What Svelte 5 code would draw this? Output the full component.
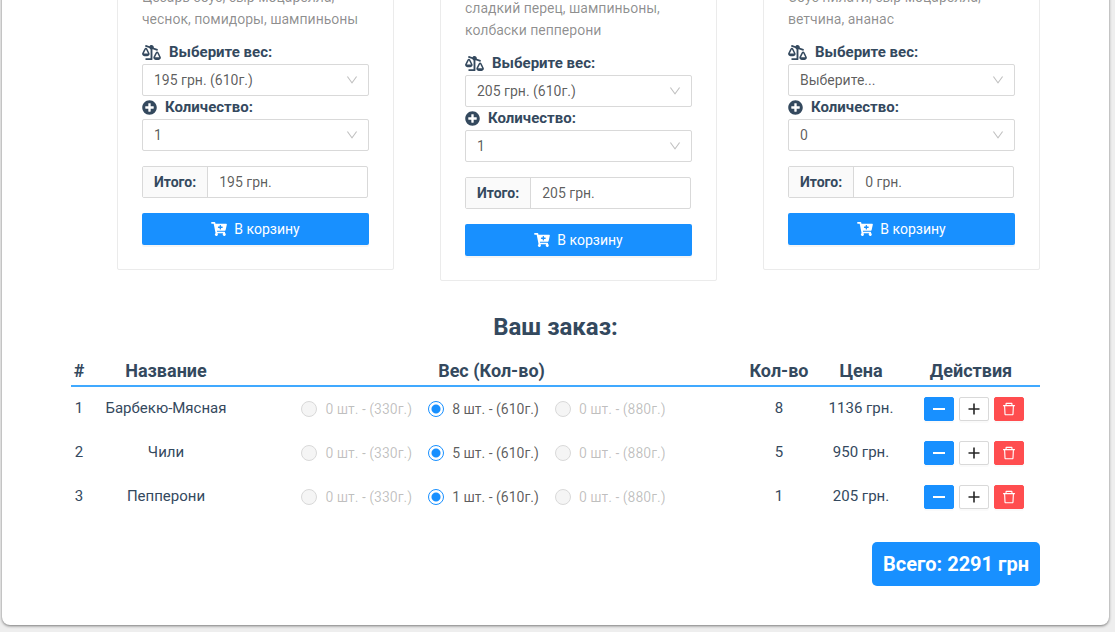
<script>
  let cards = $state([
    { lines: ['Цезарь соус, сыр моцарелла,', 'чеснок, помидоры, шампиньоны'], weight: '195 грн. (610г.)', count: '1', sum: '195 грн.' },
    { lines: ['сладкий перец, шампиньоны,', 'колбаски пепперони'], weight: '205 грн. (610г.)', count: '1', sum: '205 грн.', lower: true },
    { lines: ['Соус пилати, сыр моцарелла,', 'ветчина, ананас'], weight: 'Выберите...', count: '0', sum: '0 грн.' }
  ]);
  const orders = [
    { name: 'Барбекю-Мясная', count: 8, price: 1136 },
    { name: 'Чили', count: 5, price: 950 },
    { name: 'Пепперони', count: 1, price: 205 }
  ];
  const total = orders.reduce((sum, o) => sum + o.price, 0);
</script>

{#snippet chevron()}
  <svg class="chevron" viewBox="64 64 896 896" aria-hidden="true"><path d="M884 256h-75c-5.1 0-9.9 2.5-12.9 6.6L512 654.2 227.9 262.6c-3-4.1-7.8-6.6-12.9-6.6h-75c-6.5 0-10.3 7.4-6.5 12.7l352.6 486.1c12.8 17.6 39 17.6 51.7 0l352.6-486.1c3.9-5.3.1-12.7-6.4-12.7z" /></svg>
{/snippet}

<main>
  <section class="menu">
    {#each cards as card, i}
      <article class="card" class:lower={card.lower}>
        <p class="about">{card.lines[0]}<br />{card.lines[1]}</p>
        <label class="caption" for="weight-{i}">
          <svg class="scale" viewBox="0 0 640 512" aria-hidden="true"><path transform="translate(640 0) scale(-1 1)" d="M528 448H352V153.25c20.42-8.94 36.1-26.22 43.38-47.47l132-44.26c8.38-2.81 12.89-11.88 10.08-20.26l-10.17-30.34C524.48 2.54 515.41-1.97 507.03.84L389.11 40.37C375.3 16.36 349.69 0 320 0c-44.18 0-80 35.82-80 80 0 3.43.59 6.71 1.01 10.03l-128.39 43.05c-8.38 2.81-12.89 11.88-10.08 20.26l10.17 30.34c2.81 8.38 11.88 12.89 20.26 10.08l142.05-47.63c4.07 2.77 8.43 5.12 12.99 7.12V496c0 8.84 7.16 16 16 16h208c8.84 0 16-7.16 16-16v-32c0-8.84-7.16-16-16-16zm111.98-144c0-16.18 1.34-8.73-85.05-181.51-17.65-35.29-68.19-35.36-85.87 0-87.12 174.26-85.04 165.84-85.04 181.51H384c0 44.18 57.31 80 128 80s128-35.82 128-80h-.02zM440 288l72-144 72 144H440zm-269.07-37.51c-17.65-35.29-68.19-35.36-85.87 0C-2.06 424.75.02 416.33.02 432H0c0 44.18 57.31 80 128 80s128-35.82 128-80h-.02c0-16.18 1.34-8.73-85.05-181.51zM56 416l72-144 72 144H56z" /></svg>
          Выберите вес:
        </label>
        <div class="select">
          <select id="weight-{i}" bind:value={card.weight}><option>{card.weight}</option></select>
          {@render chevron()}
        </div>
        <label class="caption" for="count-{i}">
          <svg class="round" viewBox="0 0 512 512" aria-hidden="true"><path d="M256 8C119 8 8 119 8 256s111 248 248 248 248-111 248-248S393 8 256 8zm144 276c0 6.6-5.4 12-12 12h-92v92c0 6.6-5.4 12-12 12h-56c-6.6 0-12-5.4-12-12v-92h-92c-6.6 0-12-5.4-12-12v-56c0-6.6 5.4-12 12-12h92v-92c0-6.6 5.4-12 12-12h56c6.6 0 12 5.4 12 12v92h92c6.6 0 12 5.4 12 12v56z" /></svg>
          Количество:
        </label>
        <div class="select">
          <select id="count-{i}" bind:value={card.count}><option>{card.count}</option></select>
          {@render chevron()}
        </div>
        <div class="sum">
          <label for="sum-{i}">Итого:</label>
          <input id="sum-{i}" type="text" readonly value={card.sum} />
        </div>
        <button class="buy" type="button">
          <svg viewBox="0 0 576 512" aria-hidden="true"><path d="M504.717 320H211.572l6.545 32h268.418c15.401 0 26.816 14.301 23.403 29.319l-5.517 24.276C523.112 414.668 536 433.828 536 456c0 31.202-25.519 56.444-56.824 55.994-29.823-.429-54.35-24.631-55.155-54.447-.44-16.287 6.085-31.049 16.803-41.548H231.176C241.553 426.165 248 440.326 248 456c0 31.813-26.528 57.431-58.67 55.938-28.54-1.325-51.751-24.385-53.251-52.917-1.158-22.034 10.436-41.455 28.051-51.586L93.883 64H24C10.745 64 0 53.255 0 40V24C0 10.745 10.745 0 24 0h102.529c11.401 0 21.228 8.021 23.513 19.19L159.208 64H551.99c15.401 0 26.816 14.301 23.403 29.319l-47.273 208C525.637 312.246 515.923 320 504.717 320zM408 168h-48v-40c0-8.837-7.163-16-16-16h-16c-8.837 0-16 7.163-16 16v40h-48c-8.837 0-16 7.163-16 16v16c0 8.837 7.163 16 16 16h48v40c0 8.837 7.163 16 16 16h16c8.837 0 16-7.163 16-16v-40h48c8.837 0 16-7.163 16-16v-16c0-8.837-7.163-16-16-16z" /></svg>
          В корзину
        </button>
      </article>
    {/each}
  </section>

  <h2>Ваш заказ:</h2>
  <table>
    <colgroup>
      <col class="c-num" /><col class="c-name" /><col /><col class="c-count" /><col class="c-price" /><col class="c-acts" />
    </colgroup>
    <thead>
      <tr><th>#</th><th>Название</th><th>Вес (Кол-во)</th><th>Кол-во</th><th>Цена</th><th>Действия</th></tr>
    </thead>
    <tbody>
      {#each orders as order, i}
        <tr>
          <td>{i + 1}</td>
          <td>{order.name}</td>
          <td>
            <div class="radios">
              <label class="off"><input type="radio" name="size-{i}" disabled /><span>0 шт. - (330г.)</span></label>
              <label><input type="radio" name="size-{i}" checked /><span>{order.count} шт. - (610г.)</span></label>
              <label class="off"><input type="radio" name="size-{i}" disabled /><span>0 шт. - (880г.)</span></label>
            </div>
          </td>
          <td>{order.count}</td>
          <td>{order.price} грн.</td>
          <td>
            <div class="actions">
              <button class="minus" type="button" aria-label="Уменьшить"><svg viewBox="0 0 14 14"><path d="M1 6h12v2H1z" /></svg></button>
              <button class="plus" type="button" aria-label="Увеличить"><svg viewBox="0 0 14 14"><path d="M6.200 1.500h1.600v4.700h4.700v1.600H7.800v4.700H6.200V7.800H1.500V6.200h4.700z" /></svg></button>
              <button class="remove" type="button" aria-label="Удалить"><svg viewBox="64 64 896 896"><path d="M360 184h-8c4.400 0 8-3.600 8-8v8h304v-8c0 4.400 3.600 8 8 8h-8v72h72v-80c0-35.300-28.700-64-64-64H352c-35.300 0-64 28.700-64 64v80h72v-72zm504 72H160c-17.700 0-32 14.300-32 32v32c0 4.400 3.600 8 8 8h60.400l24.700 523c1.600 34.100 29.800 61 63.900 61h454c34.200 0 62.300-26.800 63.900-61l24.700-523H888c4.400 0 8-3.600 8-8v-32c0-17.700-14.300-32-32-32zM731.300 840H292.700l-24.200-512h487l-24.200 512z" /></svg></button>
            </div>
          </td>
        </tr>
      {/each}
    </tbody>
  </table>
  <div class="total">Всего: {total} грн</div>
</main>

<style>
  :global(body) {
    margin: 0;
    background: #eee;
  }
  :global(#app) {
    display: flow-root;
  }
  main, main * {
    box-sizing: border-box;
  }
  main {
    display: flow-root;
    margin: -48px 6px 6px 2px;
    padding: 8px 69px 39px;
    background: #fff;
    border-radius: 8px;
    box-shadow: 0 1px 3px rgba(0, 0, 0, 0.5);
    color: #34495e;
    font-family: Roboto, sans-serif;
    font-size: 15px;
  }
  svg {
    display: block;
    flex: none;
    fill: currentColor;
  }
  button, input, select {
    margin: 0;
    font: inherit;
  }
  .menu {
    display: grid;
    grid-template-columns: repeat(3, minmax(0, 1fr));
    align-items: start;
    gap: 46px;
    padding-left: 46px;
  }
  .card {
    display: flex;
    flex-direction: column;
    padding: 25px 24px 24px;
    border: 1px solid #ebebeb;
    border-radius: 2px;
    font-size: 14px;
  }
  .lower {
    margin-top: 11px;
  }
  .about {
    margin: 0 0 11px;
    line-height: 22px;
    color: rgba(0, 0, 0, 0.45);
    white-space: nowrap;
  }
  .caption {
    display: flex;
    align-items: center;
    gap: 8px;
    line-height: 23px;
    font-size: 15px;
    font-weight: 700;
  }
  .scale {
    width: 19px;
    height: 15px;
  }
  .round {
    width: 15px;
    height: 15px;
  }
  .select {
    display: grid;
    align-items: center;
  }
  .select > :global(*) {
    grid-area: 1 / 1;
  }
  select {
    appearance: none;
    width: 100%;
    height: 32px;
    padding: 0 11px;
    border: 1px solid #d9d9d9;
    border-radius: 2px;
    background: #fff;
    color: rgba(0, 0, 0, 0.65);
  }
  .chevron {
    justify-self: end;
    width: 12px;
    height: 12px;
    margin-right: 11px;
    color: rgba(0, 0, 0, 0.25);
    pointer-events: none;
  }
  .sum {
    display: flex;
    height: 32px;
    margin: 15px 1px 15px 0;
    border: 1px solid #d9d9d9;
    border-radius: 2px;
    line-height: 30px;
  }
  .sum label {
    padding: 0 11px;
    border-right: 1px solid #d9d9d9;
    background: #fafafa;
    font-weight: 700;
  }
  .sum input {
    flex: 1;
    min-width: 0;
    padding: 0 11px;
    border: 0;
    background: none;
    color: rgba(0, 0, 0, 0.65);
  }
  .buy {
    display: flex;
    align-items: center;
    justify-content: center;
    gap: 7px;
    height: 32px;
    padding: 0;
    border: 0;
    border-radius: 2px;
    background: #1890ff;
    box-shadow: 0 2px 0 rgba(0, 0, 0, 0.04);
    color: #fff;
  }
  .buy svg {
    width: 16px;
    height: 14px;
  }
  h2 {
    margin: 28px 0 11px;
    line-height: 36px;
    font-size: 24px;
    text-align: center;
  }
  table {
    width: 100%;
    table-layout: fixed;
    border-collapse: separate;
    border-spacing: 0;
    text-align: center;
  }
  .c-num { width: 16px; }
  .c-name { width: 158px; }
  .c-count { width: 82px; }
  .c-price { width: 82px; }
  .c-acts { width: 138px; }
  th {
    height: 31px;
    padding: 0;
    border-bottom: 2px solid #40a9ff;
    font-size: 18px;
    line-height: 26px;
    white-space: nowrap;
  }
  td {
    height: 44px;
    padding: 0 0 2px;
    line-height: 22px;
    white-space: nowrap;
  }
  .radios {
    display: flex;
    justify-content: center;
    padding-top: 2px;
    font-size: 14px;
    color: rgba(0, 0, 0, 0.65);
  }
  .radios label {
    display: flex;
    align-items: center;
    margin-right: 8px;
  }
  .radios span {
    padding: 0 8px;
  }
  .radios .off {
    color: rgba(0, 0, 0, 0.25);
  }
  .radios input {
    appearance: none;
    width: 16px;
    height: 16px;
    border: 1px solid #1890ff;
    border-radius: 50%;
    background: radial-gradient(circle, #1890ff 4px, #fff 5px);
  }
  .radios .off input {
    border-color: #d9d9d9;
    background: #f5f5f5;
  }
  .actions {
    display: flex;
    justify-content: center;
    gap: 5px;
    padding: 2px 0 0 6px;
  }
  .actions button {
    display: flex;
    align-items: center;
    justify-content: center;
    width: 30px;
    height: 24px;
    padding: 0;
    border: 1px solid;
    border-radius: 2px;
    box-shadow: 0 2px 0 rgba(0, 0, 0, 0.02);
    color: #fff;
  }
  .actions svg {
    width: 14px;
    height: 14px;
  }
  .actions .minus {
    border-color: #1890ff;
    background: #1890ff;
  }
  .actions .plus {
    border-color: #d9d9d9;
    background: #fff;
    color: #262626;
  }
  .actions .remove {
    border-color: #ff4d4f;
    background: #ff4d4f;
  }
  .total {
    width: fit-content;
    margin: 23px 0 0 auto;
    padding: 0 11px;
    border-radius: 5px;
    background: #1890ff;
    color: #fff;
    font-size: 20px;
    font-weight: 700;
    line-height: 44px;
  }
</style>
